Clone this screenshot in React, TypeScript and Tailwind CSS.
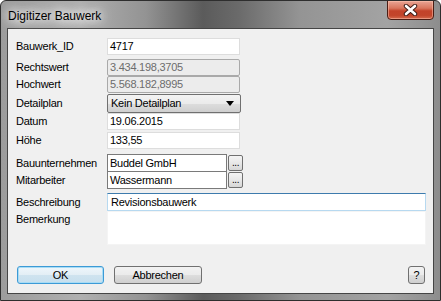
import React from "react";

const field = "h-full flex items-center pl-[2px] text-black";

const EllipsisButton = () => (
  <div className="ml-px w-[15px] h-[16px] rounded-[2px] border border-[#707070] bg-[linear-gradient(180deg,#f4f4f4_0%,#e8e8e8_50%,#d6d6d6_100%)] flex items-end justify-center leading-none pb-[2px] text-[10px] tracking-[-0.5px]">
    ...
  </div>
);

const Row = ({
  label,
  className,
  children,
}: {
  label: string;
  className: string;
  children: React.ReactNode;
}) => (
  <div className={`flex items-center ${className}`}>
    <div className="w-[91px] shrink-0">{label}</div>
    {children}
  </div>
);

const App = () => {
  return (
    <div className="w-[441px] h-[301px] flex flex-col overflow-hidden rounded-t-[6px] border border-[#2e2e2e] bg-[linear-gradient(90deg,#9c9c9c_0%,#b0b0b0_18%,#939393_33%,#5b5b5b_46%,#6a6a6a_54%,#949494_68%,#a3a3a3_88%,#8d8d8d_100%)] font-['Liberation_Sans',Arial,sans-serif] text-[11px] tracking-[-0.25px] text-black select-none">
      {/* title bar */}
      <div className="relative h-[27px] shrink-0 flex items-center pl-[7px]">
        <span className="text-[12px] tracking-normal text-black mt-[2px] [text-shadow:0_0_8px_#ffffff,0_0_12px_#ffffff,0_0_16px_#ffffff]">
          Digitizer Bauwerk
        </span>
        <div className="absolute top-[-1px] right-[6px] w-[47px] h-[20px] rounded-b-[4px] border border-[#4b1d14] bg-[linear-gradient(180deg,#e9a595_0%,#d8755d_40%,#c3432a_55%,#c2452b_80%,#d46a4e_100%)] flex items-center justify-center shadow-[inset_0_0_0_1px_rgba(255,200,180,0.5)]">
          <svg width="15" height="12" viewBox="0 0 15 12">
            <path d="M3 2 L12 10 M12 2 L3 10" stroke="#3a1a14" strokeWidth="4.4" strokeLinecap="round" />
            <path d="M3 2 L12 10 M12 2 L3 10" stroke="#ffffff" strokeWidth="2.6" strokeLinecap="round" />
          </svg>
        </div>
      </div>

      {/* client area */}
      <div className="mx-[6px] h-[266px] shrink-0 border border-[#454545] bg-[#f0f0f0] flex flex-col pl-[8px] pr-[7px]">
        <Row label="Bauwerk_ID" className="mt-[9px] h-[17px]">
          <div className={`${field} w-[133px] bg-white border border-[#dddddd]`}>4717</div>
        </Row>
        <Row label="Rechtswert" className="mt-[4px] h-[17px]">
          <div className={`${field} w-[133px] bg-[#ececec] border border-[#a9a9a9] rounded-[2px] !text-[#6d6d6d]`}>
            3.434.198,3705
          </div>
        </Row>
        <Row label="Hochwert" className="h-[17px]">
          <div className={`${field} w-[133px] bg-[#ececec] border border-[#a9a9a9] rounded-[2px] !text-[#6d6d6d]`}>
            5.568.182,8995
          </div>
        </Row>
        <Row label="Detailplan" className="mt-px h-[19px]">
          <div className="h-full w-[134px] flex items-center justify-between pl-[3px] pr-[6px] rounded-[2px] border border-[#707070] bg-[linear-gradient(180deg,#f3f3f3_0%,#ebebeb_50%,#dddddd_52%,#cfcfcf_100%)]">
            <span>Kein Detailplan</span>
            <svg width="8" height="5" viewBox="0 0 8 5">
              <path d="M0 0 L8 0 L4 5 Z" fill="#000" />
            </svg>
          </div>
        </Row>
        <Row label="Datum" className="h-[17px]">
          <div className={`${field} w-[133px] bg-white border border-[#dddddd]`}>19.06.2015</div>
        </Row>
        <Row label="Höhe" className="mt-[2px] h-[17px]">
          <div className={`${field} w-[133px] bg-white border border-[#dddddd]`}>133,55</div>
        </Row>
        <Row label="Bauunternehmen" className="mt-[5px] h-[18px]">
          <div className={`${field} w-[120px] bg-white border border-[#7a7a7a]`}>Buddel GmbH</div>
          <EllipsisButton />
        </Row>
        <Row label="Mitarbeiter" className="mt-[-1px] h-[18px]">
          <div className={`${field} w-[120px] bg-white border border-[#7a7a7a]`}>Wassermann</div>
          <EllipsisButton />
        </Row>
        <Row label="Beschreibung" className="mt-[4px] h-[18px]">
          <div className={`${field} flex-1 bg-white border border-[#b7d9f0] border-t-[#3d7bad] pl-[3px]`}>
            Revisionsbauwerk
          </div>
        </Row>
        <div className="flex h-[34px]">
          <div className="w-[91px] shrink-0">Bemerkung</div>
          <div className="flex-1 bg-white border border-[#f4f4f4]" />
        </div>

        {/* buttons */}
        <div className="mt-[21px] h-[18px] flex items-center pl-px pr-[1px]">
          <div className="w-[87px] h-full flex items-center justify-center rounded-[3px] border border-[#3c9ad6] bg-[linear-gradient(180deg,#eef6fb_0%,#e3eef5_50%,#cfe3ef_52%,#c7dfee_100%)] shadow-[inset_0_0_0_1px_#a8dcf5]">
            OK
          </div>
          <div className="ml-[10px] w-[88px] h-full flex items-center justify-center rounded-[3px] border border-[#707070] bg-[linear-gradient(180deg,#f2f2f2_0%,#ebebeb_50%,#dddddd_52%,#cfcfcf_100%)]">
            Abbrechen
          </div>
          <div className="ml-auto w-[17px] h-full flex items-center justify-center rounded-[3px] border border-[#707070] bg-[linear-gradient(180deg,#f2f2f2_0%,#ebebeb_50%,#dddddd_52%,#cfcfcf_100%)]">
            ?
          </div>
        </div>
      </div>
    </div>
  );
};

export default App;
